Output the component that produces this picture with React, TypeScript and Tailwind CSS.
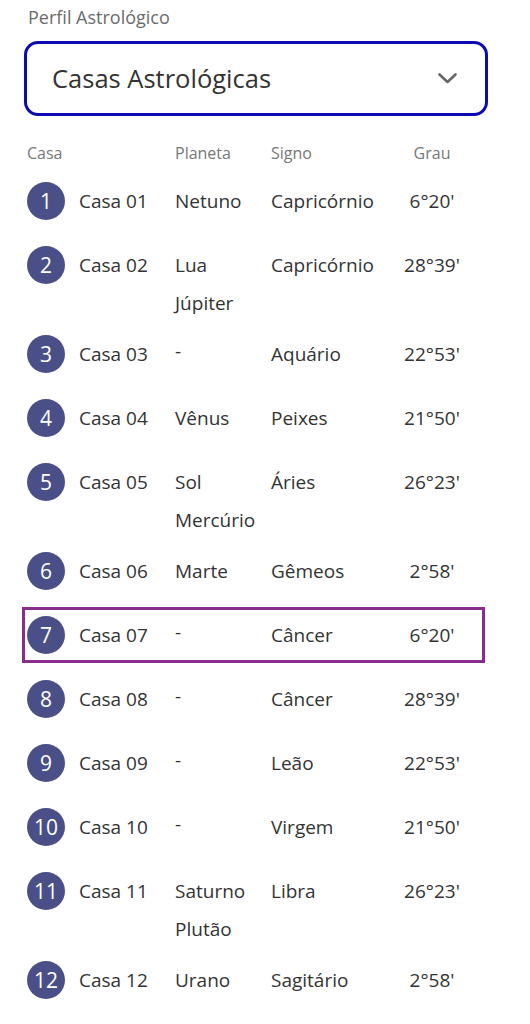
import * as React from 'react';

type Casa = {
  n: number;
  planetas: string[];
  signo: string;
  grau: string;
};

const casas: Casa[] = [
  { n: 1, planetas: ['Netuno'], signo: 'Capricórnio', grau: "6°20'" },
  { n: 2, planetas: ['Lua', 'Júpiter'], signo: 'Capricórnio', grau: "28°39'" },
  { n: 3, planetas: ['-'], signo: 'Aquário', grau: "22°53'" },
  { n: 4, planetas: ['Vênus'], signo: 'Peixes', grau: "21°50'" },
  { n: 5, planetas: ['Sol', 'Mercúrio'], signo: 'Áries', grau: "26°23'" },
  { n: 6, planetas: ['Marte'], signo: 'Gêmeos', grau: "2°58'" },
  { n: 7, planetas: ['-'], signo: 'Câncer', grau: "6°20'" },
  { n: 8, planetas: ['-'], signo: 'Câncer', grau: "28°39'" },
  { n: 9, planetas: ['-'], signo: 'Leão', grau: "22°53'" },
  { n: 10, planetas: ['-'], signo: 'Virgem', grau: "21°50'" },
  { n: 11, planetas: ['Saturno', 'Plutão'], signo: 'Libra', grau: "26°23'" },
  { n: 12, planetas: ['Urano'], signo: 'Sagitário', grau: "2°58'" },
];

const ativa = 7;

function CasaRow({ casa }: { casa: Casa }) {
  const selected = casa.n === ativa;
  return (
    <div
      className={`grid grid-cols-[52px_96px_96px_1fr_84px] items-start border-[3px] py-[6px] pl-[2px] pr-[8px] ${
        selected ? 'border-[#8c2b8e]' : 'border-transparent'
      }`}
    >
      <div className="flex h-[38px] w-[38px] items-center justify-center rounded-full bg-[#4b4f87] text-[21px] leading-none text-white">
        {casa.n}
      </div>
      <div className="flex h-[38px] items-center">Casa {String(casa.n).padStart(2, '0')}</div>
      <div className="flex flex-col">
        {casa.planetas.map((p, i) => (
          <span key={p} className={i === 0 ? 'leading-[38px]' : '-mb-[13px] leading-[38px]'}>
            {p === '-' ? <span className="relative -top-[3px]">-</span> : p}
          </span>
        ))}
      </div>
      <div className="flex h-[38px] items-center">{casa.signo}</div>
      <div className="flex h-[38px] items-center justify-center">{casa.grau}</div>
    </div>
  );
}

export default function App() {
  return (
    <div className="min-h-[1024px] w-[530px] bg-white pl-[22px] pt-[5px] font-['Open_Sans',sans-serif] text-[19px] text-[#333]">
      <p className="ml-[6px] text-[18px] leading-[24px] text-[#6b6b6b]">Perfil Astrológico</p>

      <div className="ml-[2px] mt-[12px] flex h-[75px] w-[464px] items-center justify-between rounded-[14px] border-[3px] border-[#0b0bb2] pl-[25px] pr-[28px]">
        <span className="text-[25.5px] text-[#333]">Casas Astrológicas</span>
        <svg width="19" height="11" viewBox="0 0 19 11" fill="none">
          <path d="M1.5 1.5 L9.5 9 L17.5 1.5" stroke="#666" strokeWidth="2.6" strokeLinecap="round" strokeLinejoin="round" />
        </svg>
      </div>

      <div className="mt-[26px] grid w-[463px] grid-cols-[52px_96px_96px_1fr_84px] px-[5px] pr-[11px] text-[16px] leading-[22px] text-[#777]">
        <span className="col-span-2">Casa</span>
        <span>Planeta</span>
        <span>Signo</span>
        <span className="text-center">Grau</span>
      </div>

      <div className="mt-[9px] flex w-[463px] flex-col gap-[8px]">
        {casas.map((c) => (
          <CasaRow key={c.n} casa={c} />
        ))}
      </div>
    </div>
  );
}
